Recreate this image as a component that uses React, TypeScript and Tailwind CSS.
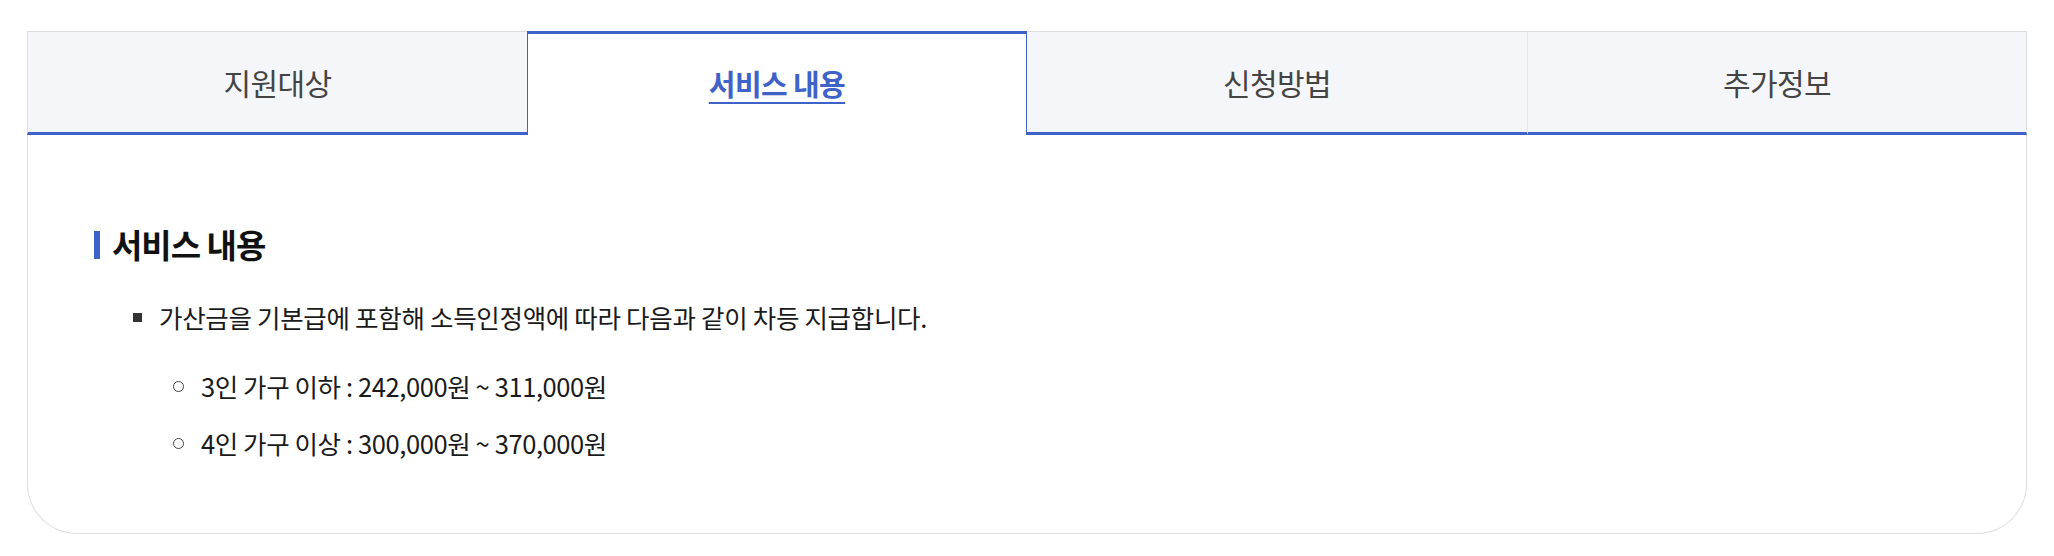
import React from "react";

const tabs = ["지원대상", "서비스 내용", "신청방법", "추가정보"];
const ACTIVE = 1;

export default function App() {
  return (
    <div
      className="min-h-[556px] bg-white pl-[27px] pt-[31px]"
      style={{ fontFamily: '"Noto Sans CJK KR", "Noto Sans", sans-serif' }}
    >
      <div className="w-[2000px]">
        {/* 탭 */}
        <div className="flex h-[104px]">
          {tabs.map((t, i) => {
            if (i === ACTIVE) {
              return (
                <div
                  key={t}
                  className="flex w-1/4 items-center justify-center border-x border-t-[3px] border-[#3f62c8] bg-white pb-[2px]"
                >
                  <span className="text-[29px] font-bold tracking-[-0.6px] text-[#3f62c8] underline decoration-[2px] underline-offset-[6px]">
                    {t}
                  </span>
                </div>
              );
            }
            return (
              <div
                key={t}
                className={
                  "flex w-1/4 items-center justify-center border-t border-b-[3px] border-t-[#dcdde1] border-b-[#3f62c8] bg-[#f5f6fa] " +
                  (i === 0 ? "border-l border-l-[#dcdde1] " : "") +
                  (i === 3 ? "border-x border-l-[#e6e8ee] border-r-[#dcdde1]" : "")
                }
              >
                <span className="text-[30px] tracking-[-0.6px] text-[#444444]">{t}</span>
              </div>
            );
          })}
        </div>

        {/* 내용 */}
        <div className="rounded-b-[50px] border-x border-b border-[#dddddd] pb-[74px] pl-[66px] pt-[90px] text-[#1a1a1a]">
          <h3 className="flex items-center gap-[12px] text-[33px] font-bold leading-[39px] tracking-[-1px] text-[#111111]">
            <span className="h-[28px] w-[6px] bg-[#3f62c8]" />
            서비스 내용
          </h3>
          <ul className="mt-[37px]">
            <li>
              <div className="flex items-center text-[25.5px] leading-[32px] tracking-[-0.3px]">
                <span className="ml-[39px] mr-[17px] h-[9px] w-[9px] bg-[#333333]" />
                가산금을 기본급에 포함해 소득인정액에 따라 다음과 같이 차등 지급합니다.
              </div>
              <ul className="mt-[37px] flex flex-col gap-[25px]">
                {["3인 가구 이하 : 242,000원 ~ 311,000원", "4인 가구 이상 : 300,000원 ~ 370,000원"].map((s) => (
                  <li key={s} className="flex items-center text-[25.5px] leading-[32px] tracking-[-0.4px]">
                    <span className="ml-[79px] mr-[17px] h-[11px] w-[11px] rounded-full border border-[#444444]" />
                    {s}
                  </li>
                ))}
              </ul>
            </li>
          </ul>
        </div>
      </div>
    </div>
  );
}
